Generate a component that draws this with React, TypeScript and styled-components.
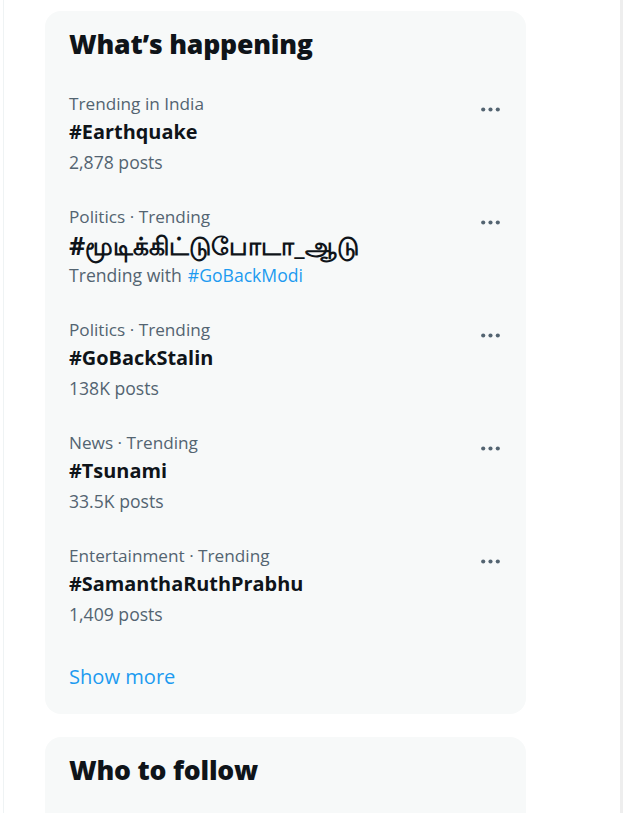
import React from "react";
import styled, { createGlobalStyle } from "styled-components";

const GlobalStyle = createGlobalStyle`
  html, body { margin: 0; padding: 0; background: #ffffff; }
  body { font-family: "Open Sans", "Noto Sans", "Liberation Sans", sans-serif; color: #0f1419; }
  * { box-sizing: border-box; }
`;

const Page = styled.div`
  display: flex;
  width: 623px;
  height: 813px;
  overflow: hidden;
`;

const Gutter = styled.div`
  width: 3px;
  flex: none;
`;

const Divider = styled.div`
  width: 1px;
  flex: none;
  background: #eff3f4;
`;

const Sidebar = styled.aside`
  flex: 1;
  display: flex;
  flex-direction: column;
  gap: 23px;
  padding: 11px 0 0 41px;
`;

const ScrollTrack = styled.div`
  width: 3px;
  flex: none;
  background: #eeeeee;
`;

const Card = styled.section`
  width: 481px;
  background: #f7f9f9;
  border-radius: 16px;
  display: flex;
  flex-direction: column;
  flex: none;
`;

const CardTitle = styled.h2`
  margin: 0;
  padding: 15px 24px 15px;
  font-size: 26.6px;
  line-height: 36px;
  font-weight: 800;
  letter-spacing: -0.2px;
  color: #0f1419;
`;

const Trend = styled.div`
  display: flex;
  align-items: flex-start;
  padding: 13.5px 23px 13.5px 24px;
`;

const TrendBody = styled.div`
  flex: 1;
  display: flex;
  flex-direction: column;
  min-width: 0;
`;

const Meta = styled.div`
  font-size: 17.2px;
  line-height: 26px;
  color: #536471;
`;

const Topic = styled.div<{ $wide?: boolean }>`
  font-size: ${(p) => (p.$wide ? "25.2px" : "19.9px")};
  line-height: 30px;
  font-weight: 700;
  color: #0f1419;
  white-space: nowrap;
`;

const Sub = styled.div`
  font-size: 17.6px;
  line-height: 30px;
  color: #536471;
  display: flex;
  gap: 6px;
`;

const Tag = styled.span`
  color: #1d9bf0;
`;

const MoreButton = styled.button`
  flex: none;
  width: 25px;
  height: 25px;
  margin-top: 6.5px;
  padding: 0;
  border: 0;
  background: transparent;
  color: #536471;
  display: flex;
  align-items: center;
  justify-content: center;
  cursor: pointer;
`;

const ShowMore = styled.a`
  display: block;
  padding: 20px 24px 22px;
  font-size: 20.1px;
  line-height: 30px;
  color: #1d9bf0;
  text-decoration: none;
`;

const FollowCard = styled(Card)`
  height: 200px;
`;

const Dots = () => (
  <svg width="25" height="25" viewBox="0 0 24 24" aria-hidden="true">
    <circle cx="5" cy="12" r="2" fill="currentColor" />
    <circle cx="12" cy="12" r="2" fill="currentColor" />
    <circle cx="19" cy="12" r="2" fill="currentColor" />
  </svg>
);

type TrendItem = {
  meta: string;
  topic: string;
  posts?: string;
  with?: string;
  wide?: boolean;
};

const trends: TrendItem[] = [
  { meta: "Trending in India", topic: "#Earthquake", posts: "2,878 posts" },
  { meta: "Politics · Trending", topic: "#மூடிக்கிட்டுபோடா_ஆடு", with: "#GoBackModi", wide: true },
  { meta: "Politics · Trending", topic: "#GoBackStalin", posts: "138K posts" },
  { meta: "News · Trending", topic: "#Tsunami", posts: "33.5K posts" },
  { meta: "Entertainment · Trending", topic: "#SamanthaRuthPrabhu", posts: "1,409 posts" },
];

export default function App() {
  return (
    <>
      <GlobalStyle />
      <Page>
        <Gutter />
        <Divider />
        <Sidebar>
          <Card>
            <CardTitle>What’s happening</CardTitle>
            {trends.map((t, i) => (
              <Trend key={i}>
                <TrendBody>
                  <Meta>{t.meta}</Meta>
                  <Topic $wide={t.wide}>{t.topic}</Topic>
                  {t.with ? (
                    <Sub>
                      <span>Trending with</span>
                      <Tag>{t.with}</Tag>
                    </Sub>
                  ) : (
                    <Sub>{t.posts}</Sub>
                  )}
                </TrendBody>
                <MoreButton aria-label="More">
                  <Dots />
                </MoreButton>
              </Trend>
            ))}
            <ShowMore href="#">Show more</ShowMore>
          </Card>
          <FollowCard>
            <CardTitle>Who to follow</CardTitle>
          </FollowCard>
        </Sidebar>
        <ScrollTrack />
      </Page>
    </>
  );
}
